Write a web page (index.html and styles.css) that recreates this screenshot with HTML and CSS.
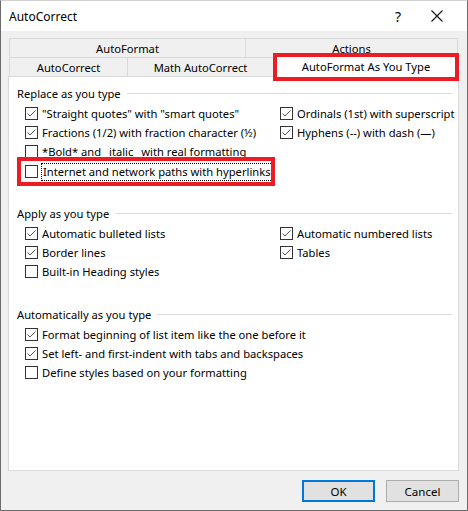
FILE: index.html
```html
<!DOCTYPE html>
<html lang="en">
<head>
  <meta charset="UTF-8">
  <title>AutoCorrect</title>
  <link rel="stylesheet" href="styles.css">
</head>
<body>
  <div class="window">
    <div class="titlebar">
      <span class="title">AutoCorrect</span>
      <span class="help">?</span>
      <span class="close">
        <svg width="12" height="12" viewBox="0 0 12 12"><path d="M0.5 0.5 L11.5 11.5 M11.5 0.5 L0.5 11.5" stroke="#111" stroke-width="1.1" fill="none"/></svg>
      </span>
    </div>

    <div class="content">
      <div class="tabs">
        <div class="tab-row">
          <div class="tab w-af">AutoFormat</div>
          <div class="tab w-act">Actions</div>
        </div>
        <div class="tab-row">
          <div class="tab w-ac">AutoCorrect</div>
          <div class="tab w-math">Math AutoCorrect</div>
          <div class="tab active">AutoFormat As You Type</div>
        </div>
      </div>

      <div class="panel">
        <div class="group">
          <div class="heading"><span>Replace as you type</span></div>
          <div class="opts">
            <label class="opt"><span class="box on"></span>"Straight quotes" with "smart quotes"</label>
            <label class="opt"><span class="box on"></span>Ordinals (1st) with superscript</label>
            <label class="opt"><span class="box on"></span>Fractions (1/2) with fraction character (½)</label>
            <label class="opt"><span class="box on"></span>Hyphens (--) with dash (—)</label>
            <label class="opt full"><span class="box"></span>*Bold* and _italic_ with real formatting</label>
            <label class="opt full marked"><span class="box"></span><span class="focus">Internet and network paths with hyperlinks</span></label>
          </div>
        </div>

        <div class="group">
          <div class="heading"><span>Apply as you type</span></div>
          <div class="opts">
            <label class="opt"><span class="box on"></span>Automatic bulleted lists</label>
            <label class="opt"><span class="box on"></span>Automatic numbered lists</label>
            <label class="opt"><span class="box on"></span>Border lines</label>
            <label class="opt"><span class="box on"></span>Tables</label>
            <label class="opt full"><span class="box"></span>Built-in Heading styles</label>
          </div>
        </div>

        <div class="group">
          <div class="heading"><span>Automatically as you type</span></div>
          <div class="opts">
            <label class="opt full"><span class="box on"></span>Format beginning of list item like the one before it</label>
            <label class="opt full"><span class="box on"></span>Set left- and first-indent with tabs and backspaces</label>
            <label class="opt full"><span class="box"></span>Define styles based on your formatting</label>
          </div>
        </div>
      </div>

      <div class="buttons">
        <button class="btn default">OK</button>
        <button class="btn">Cancel</button>
      </div>
    </div>
  </div>
</body>
</html>
```

FILE: styles.css
```css
* {
  box-sizing: border-box;
}
body {
  margin: 0;
  font-family: 'Noto Sans', 'Open Sans', sans-serif;
  font-size: 11.2px;
  color: #000;
  background: #fff;
}
.window {
  width: 468px;
  height: 511px;
  border: 1px solid #6b6b6b;
  border-top-color: #d0d0d0;
  display: flex;
  flex-direction: column;
}

/* タイトルバー */
.titlebar {
  height: 30px;
  background: #fff;
  display: flex;
  align-items: center;
  padding-left: 8px;
}
.title {
  font-size: 12px;
  flex: 1;
}
.help {
  font-size: 14px;
  width: 40px;
  text-align: center;
}
.close {
  width: 38px;
  display: flex;
  justify-content: center;
  margin-right: 11px;
}
.close svg {
  display: block;
}

.content {
  flex: 1;
  background: #f0f0f0;
  padding: 7px 8px 0 7px;
  display: flex;
  flex-direction: column;
}

/* タブ */
.tabs {
  padding-left: 1px;
}
.tab-row {
  display: flex;
  height: 19px;
}
.tab {
  border: 1px solid #d9d9d9;
  border-bottom: none;
  margin-right: -1px;
  text-align: center;
  line-height: 20px;
  background: #f0f0f0;
}
.w-af { width: 237px; }
.w-act { width: 213px; }
.w-ac { width: 119px; }
.w-math { width: 147px; }
.tab.active {
  width: 178px;
  margin-left: 4px;
  background: #fff;
  border: none;
  outline: 4px solid #ed1c24;
  height: 20px;
  line-height: 19px;
  position: relative;
  z-index: 1;
}

/* パネル */
.panel {
  background: #fff;
  border: 1px solid #d9d9d9;
  height: 395px;
  padding: 8px 6px 0 8px;
}
.group + .group {
  margin-top: 25px;
}
.heading {
  display: flex;
  align-items: center;
  height: 16px;
  margin-bottom: 3px;
}
.heading::after {
  content: "";
  flex: 1;
  height: 1px;
  background: #dcdcdc;
  margin-left: 6px;
  margin-top: 1px;
}
.opts {
  display: grid;
  grid-template-columns: 255px 1fr;
  grid-auto-rows: 19px;
  padding-left: 8px;
}
.opt {
  display: flex;
  align-items: center;
  white-space: nowrap;
}
.opt.full {
  grid-column: 1 / 3;
}
.box {
  width: 13px;
  height: 13px;
  border: 1px solid #333;
  margin-right: 4px;
  flex: none;
  background: #fff;
}
.box.on {
  background: #fff url("data:image/svg+xml;utf8,<svg xmlns='http://www.w3.org/2000/svg' width='11' height='11' viewBox='0 0 11 11'><path d='M1.5 5.5 L4 8 L9.5 2.5' stroke='%23555' stroke-width='1' fill='none'/></svg>") no-repeat center;
}
.opt.marked {
  width: 250px;
  margin-left: -4px;
  padding-left: 4px;
  outline: 4px solid #ed1c24;
  height: 21px;
}
.focus {
  outline: 1px dotted #000;
  padding: 0 1px;
  line-height: 16px;
}

/* ボタン */
.buttons {
  display: flex;
  justify-content: flex-end;
  gap: 11px;
  padding-top: 9px;
}
.btn {
  width: 73px;
  height: 22px;
  font-family: inherit;
  font-size: 11.5px;
  background: #e1e1e1;
  border: 1px solid #adadad;
  padding: 0;
}
.btn.default {
  border: 2px solid #0078d7;
}
```
